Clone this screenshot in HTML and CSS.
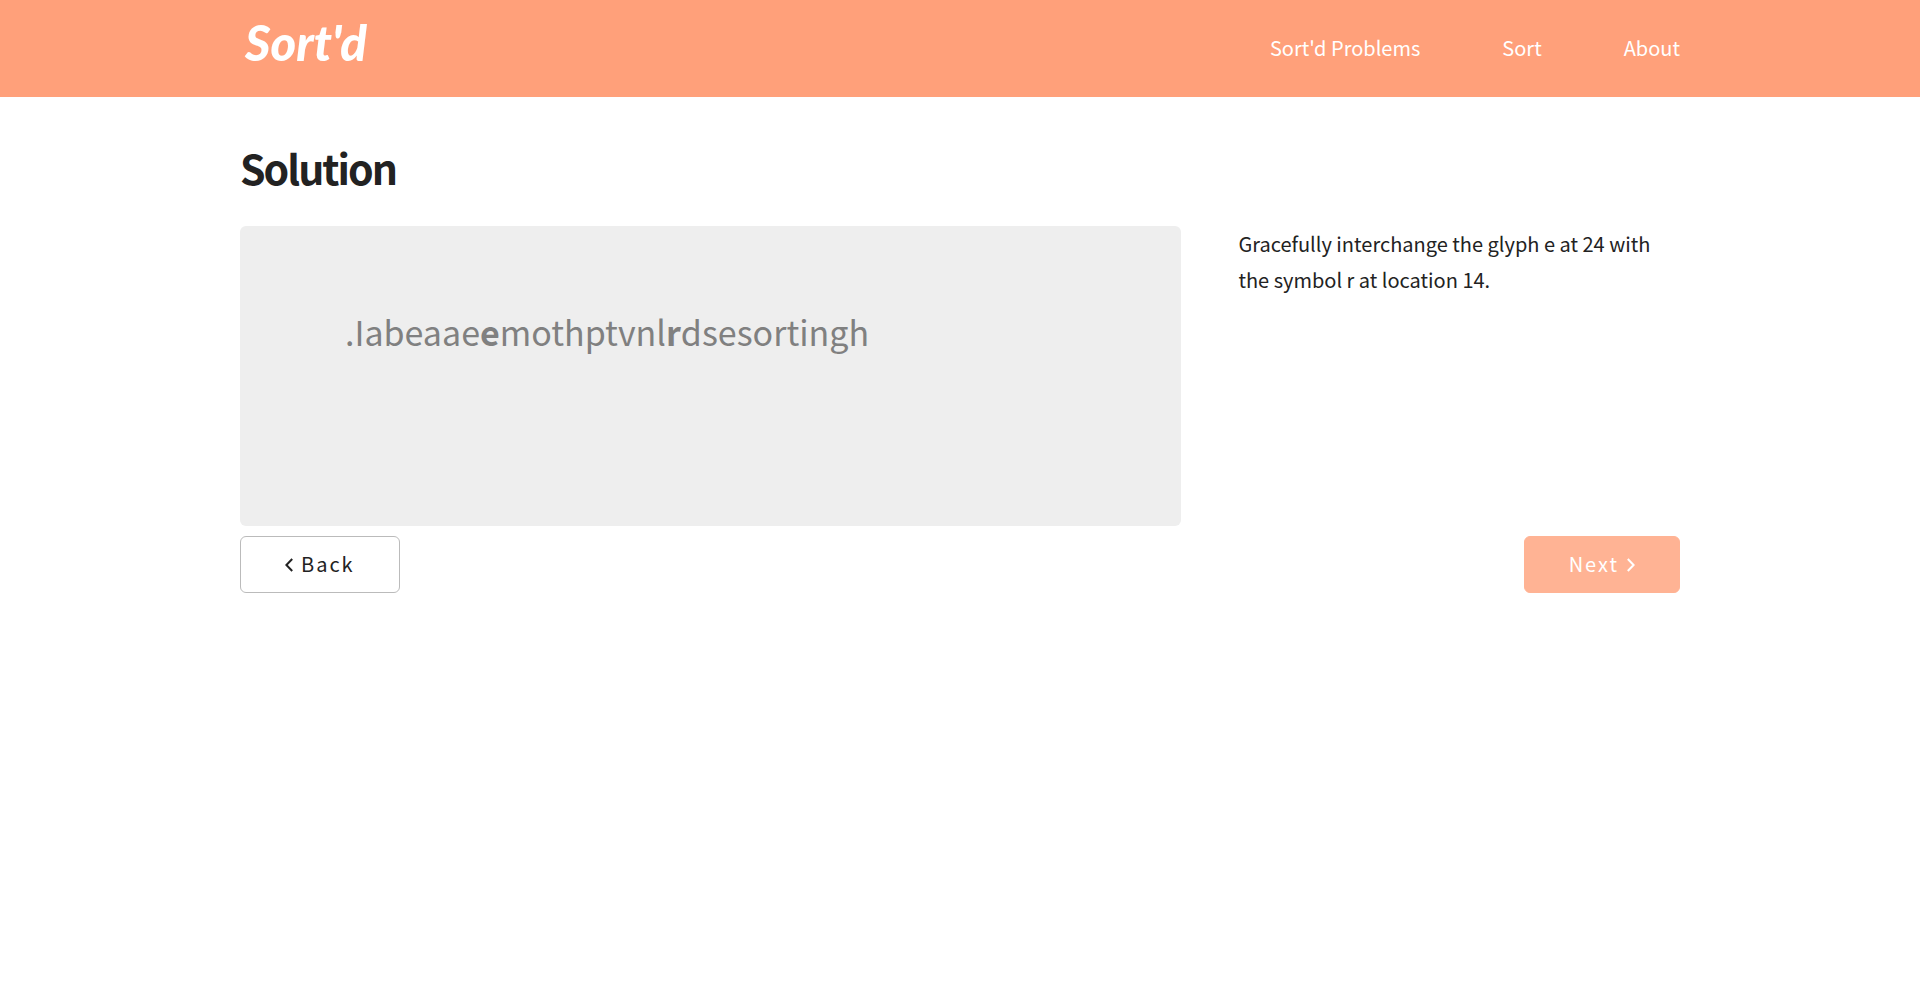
FILE: index.html
```html
<!DOCTYPE html>
<html lang="en">
<head>
<meta charset="utf-8">
<meta name="viewport" content="width=device-width, initial-scale=1">
<title>Sort'd</title>
<link rel="stylesheet" href="styles.css">
</head>
<body>
<header class="site-header">
  <div class="container header-row">
    <a class="logo" href="#">Sort'd</a>
    <nav class="site-nav">
      <a href="#">Sort'd Problems</a>
      <a href="#">Sort</a>
      <a href="#">About</a>
    </nav>
  </div>
</header>
<main class="container">
  <h1 class="title">Solution</h1>
  <div class="solution">
    <div class="board"><p class="letters">.Iabeaae<b>e</b>mothptvnl<b>r</b>dsesortingh</p></div>
    <p class="step">Gracefully interchange the glyph e at 24 with the symbol r at location 14.</p>
  </div>
  <div class="actions">
    <button class="button" type="button"><svg class="chevron" viewBox="0 0 8 14" aria-hidden="true"><path d="M7.2 1 1.4 7l5.8 6"/></svg>Back</button>
    <button class="button button-primary" type="button">Next<svg class="chevron" viewBox="0 0 8 14" aria-hidden="true"><path d="M.8 1l5.8 6L.8 13"/></svg></button>
  </div>
</main>
</body>
</html>
```
FILE: styles.css
```css
* { box-sizing: border-box; }
body {
  margin: 0;
  background: #fff;
  color: #222;
  font: 20px/36px "Noto Sans CJK SC", "Noto Sans", sans-serif;
}
.container { width: 75%; margin: 0 auto; }
.site-header { background: #ffa07a; color: #fff; }
.header-row {
  display: flex;
  justify-content: space-between;
  align-items: center;
  min-height: 97px;
}
.logo {
  padding: 0 0 14px 5px;
  color: inherit;
  font: italic 900 49px/56px Lato, cursive;
  text-decoration: none;
}
.site-nav { display: flex; gap: 82px; padding-bottom: 2px; }
.site-nav a { color: inherit; text-decoration: none; }
.title {
  margin: 0;
  padding: 42px 0 30px;
  font-size: 41px;
  line-height: 57px;
  font-weight: 700;
  letter-spacing: -2px;
}
.solution {
  display: grid;
  grid-template-columns: 65.333% 30.667%;
  justify-content: space-between;
}
.board {
  min-height: 300px;
  padding: 80px 105px;
  border-radius: 6px;
  background: #eee;
  color: #808080;
}
.letters {
  margin: 0;
  font-size: 34px;
  line-height: 52px;
}
.step { margin: 0; }
.actions {
  display: flex;
  justify-content: space-between;
  margin-top: 10px;
}
.button {
  display: flex;
  align-items: center;
  justify-content: center;
  gap: 8px;
  height: 57px;
  padding: 0 44px 2px;
  border: 1px solid #bbb;
  border-radius: 6px;
  background: #fff;
  color: #222;
  font: inherit;
  letter-spacing: 2px;
}
.button-primary {
  border-color: #ffb394;
  background: #ffb394;
  color: #fff;
}
.chevron {
  width: 8px;
  height: 14px;
  margin-top: 2px;
  fill: none;
  stroke: currentColor;
  stroke-width: 2;
}
```
